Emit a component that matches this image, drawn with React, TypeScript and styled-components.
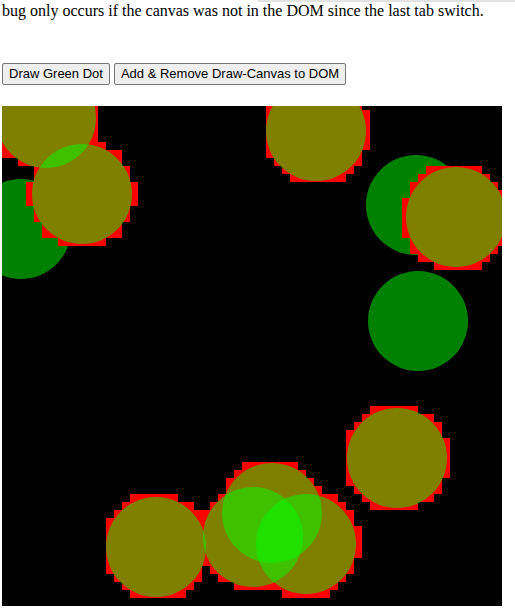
import React from "react";
import styled, { createGlobalStyle } from "styled-components";

const GlobalStyle = createGlobalStyle`
  html, body { margin: 0; padding: 0; background: #fff; }
  body { font-family: "Liberation Serif", "Times New Roman", serif; font-size: 16px; color: #000; overflow: hidden; }
`;

const Page = styled.div`
  display: flex;
  flex-direction: column;
  align-items: flex-start;
  padding-left: 2px;
`;

const TopRule = styled.div`
  align-self: stretch;
  height: 2px;
  margin-left: 256px;
  background: #e3e3e3;
`;

const Intro = styled.p`
  margin: 0;
  line-height: 18px;
  white-space: nowrap;
`;

const Toolbar = styled.div`
  display: flex;
  gap: 4px;
  margin-top: 43px;
`;

const Button = styled.button`
  font-family: "Liberation Sans", Arial, sans-serif;
  font-size: 13px;
  line-height: 18px;
  padding: 1px 6px;
  border: 1px solid #767676;
  border-radius: 2px;
  background: #efefef;
  color: #000;
  cursor: default;
`;

const Canvas = styled.svg`
  display: block;
  margin-top: 21px;
  background: #000;
`;

type Dot = { x: number; y: number; red: boolean };

const R = 50;
const R_RED = 54;
const CELL = 8;
const Y_OFF = 4;

const dots: Dot[] = [
  { x: 44, y: 12, red: true },
  { x: 80, y: 88, red: true },
  { x: 19, y: 123, red: false },
  { x: 314, y: 25, red: true },
  { x: 414, y: 99, red: false },
  { x: 454, y: 111, red: true },
  { x: 416, y: 215, red: false },
  { x: 395, y: 352, red: true },
  { x: 154, y: 441, red: true },
  { x: 270, y: 407, red: true },
  { x: 251, y: 431, red: true },
  { x: 304, y: 438, red: true },
];

function redCells(d: Dot) {
  const cells: { x: number; y: number }[] = [];
  const i0 = Math.floor((d.x - R_RED) / CELL) - 1;
  const i1 = Math.ceil((d.x + R_RED) / CELL) + 1;
  const j0 = Math.floor((d.y - R_RED - Y_OFF) / CELL) - 1;
  const j1 = Math.ceil((d.y + R_RED - Y_OFF) / CELL) + 1;
  for (let i = i0; i <= i1; i++) {
    for (let j = j0; j <= j1; j++) {
      const x0 = i * CELL;
      const y0 = j * CELL + Y_OFF;
      const cx = x0 + CELL / 2;
      const cy = y0 + CELL / 2;
      if (Math.hypot(cx - d.x, cy - d.y) < R_RED) cells.push({ x: x0, y: y0 });
    }
  }
  return cells;
}

function DrawCanvas() {
  const plain = dots.filter((d) => !d.red);
  const marked = dots.filter((d) => d.red);
  return (
    <Canvas width={500} height={500} viewBox="0 0 500 500">
      <rect width={500} height={500} fill="#000" />
      <g fill="#00ff00" fillOpacity={0.5}>
        {plain.map((d, k) => (
          <circle key={k} cx={d.x} cy={d.y} r={R} />
        ))}
      </g>
      <g fill="#ff0000" shapeRendering="crispEdges">
        {marked.flatMap((d, k) =>
          redCells(d).map((c) => (
            <rect key={`${k}-${c.x}-${c.y}`} x={c.x} y={c.y} width={CELL} height={CELL} />
          ))
        )}
      </g>
      <g fill="#00ff00" fillOpacity={0.5}>
        {marked.map((d, k) => (
          <circle key={k} cx={d.x} cy={d.y} r={R} />
        ))}
      </g>
    </Canvas>
  );
}

export default function App() {
  return (
    <>
      <GlobalStyle />
      <Page>
        <TopRule />
        <Intro>bug only occurs if the canvas was not in the DOM since the last tab switch.</Intro>
        <Toolbar>
          <Button>Draw Green Dot</Button>
          <Button>Add &amp; Remove Draw-Canvas to DOM</Button>
        </Toolbar>
        <DrawCanvas />
      </Page>
    </>
  );
}
